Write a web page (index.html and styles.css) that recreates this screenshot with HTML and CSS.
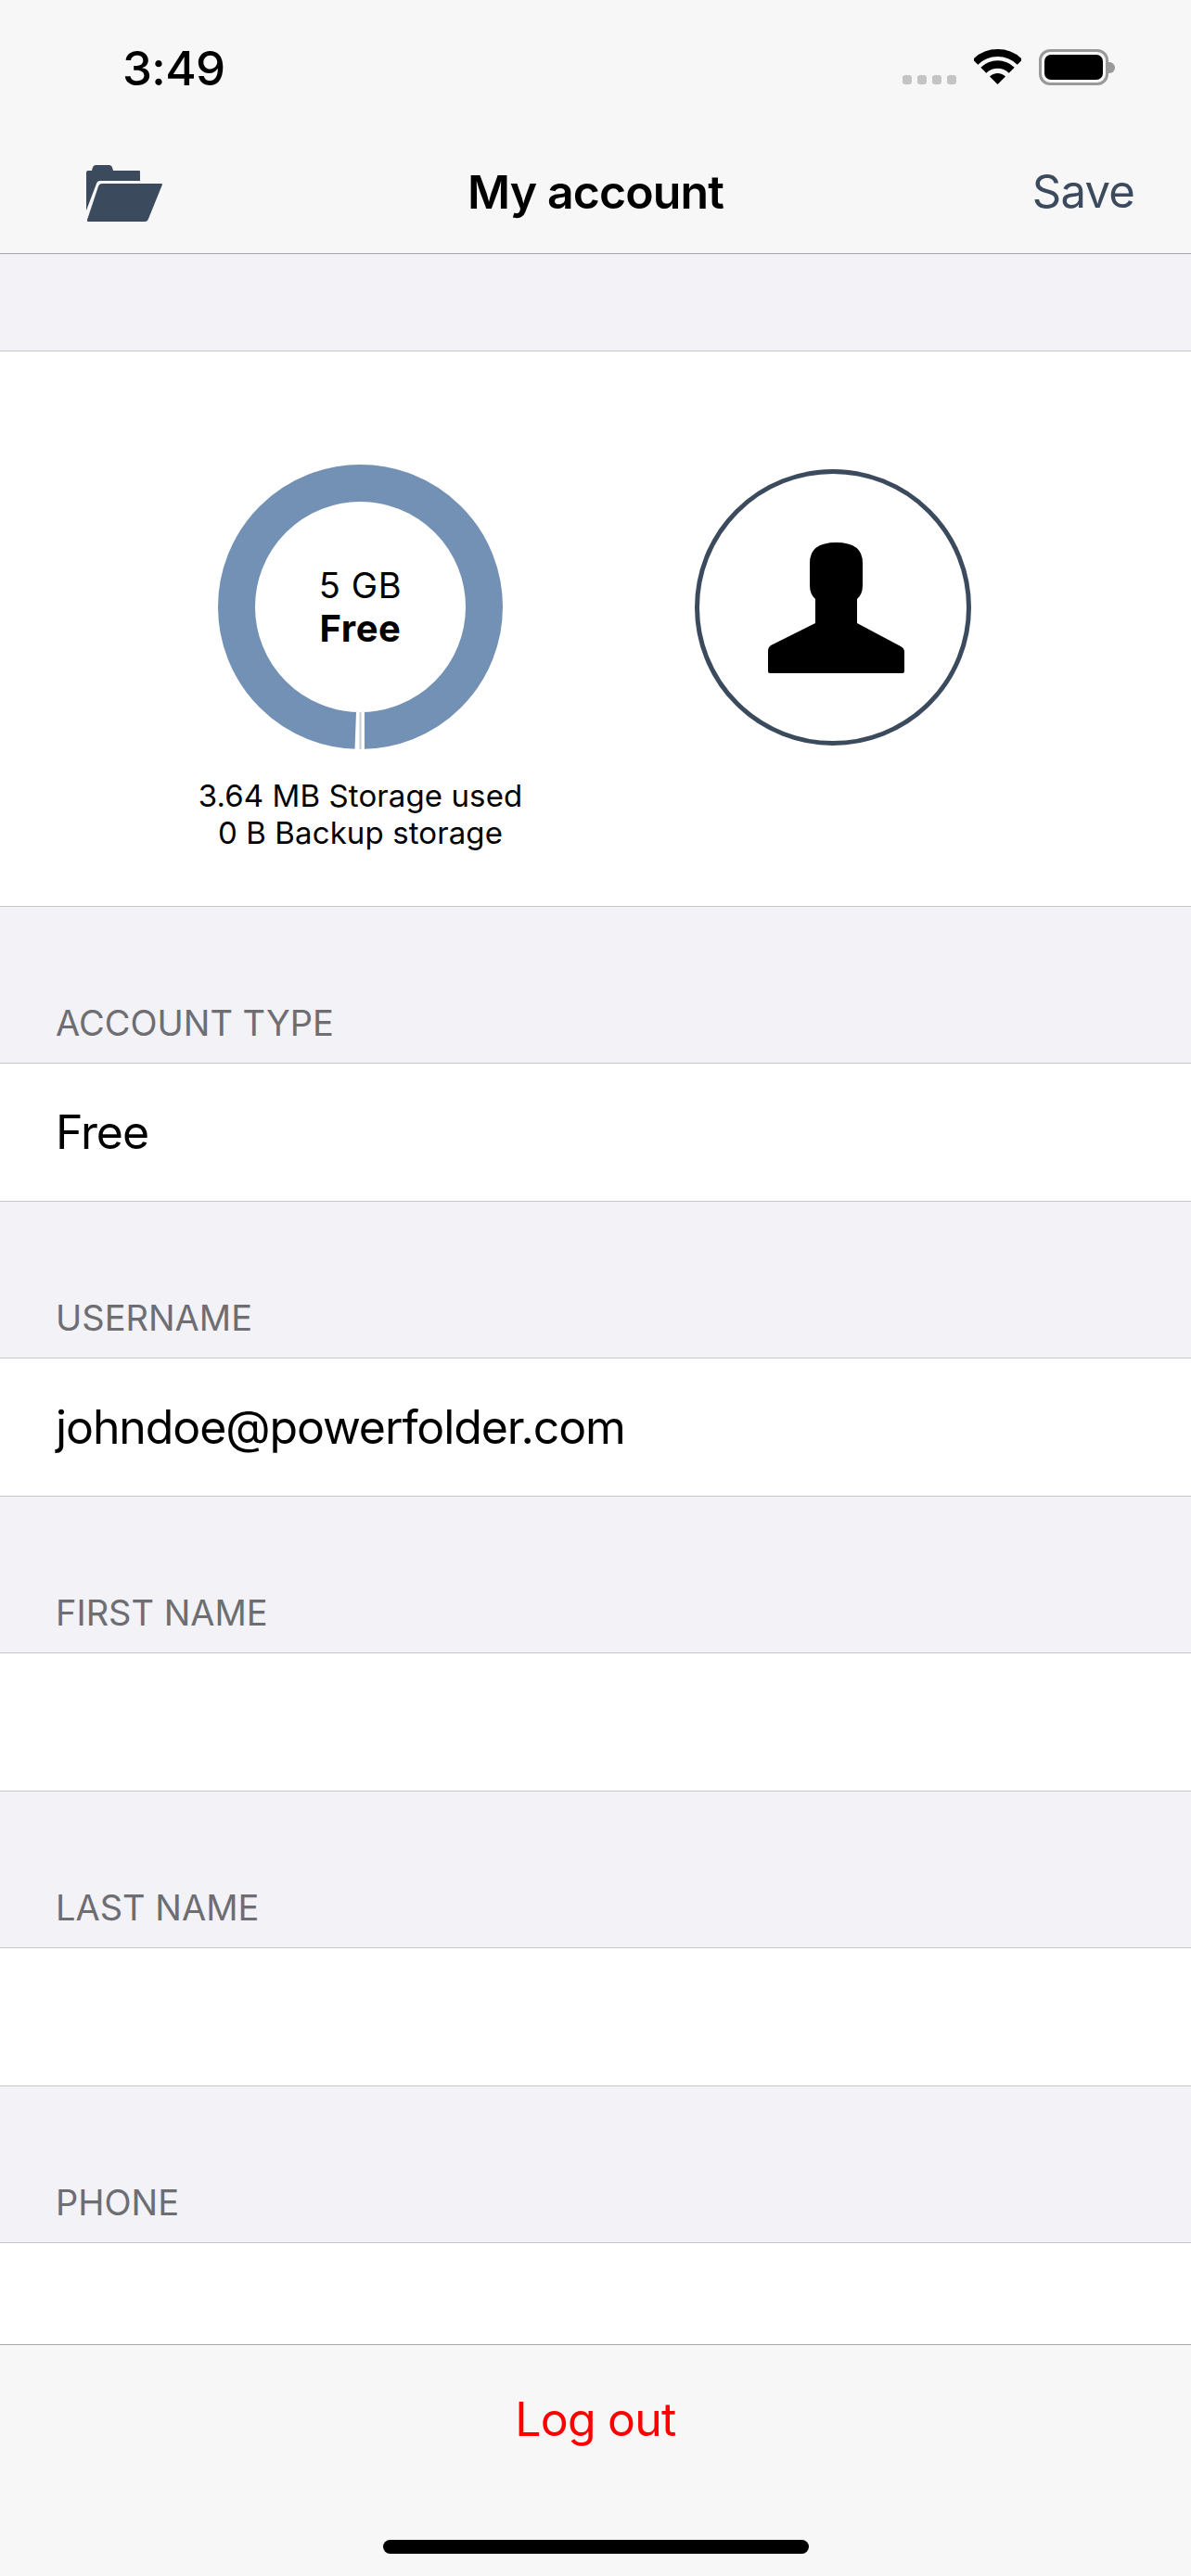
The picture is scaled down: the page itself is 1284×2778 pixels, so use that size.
FILE: index.html
```html
<!DOCTYPE html>
<html lang="en">
<head>
  <meta charset="UTF-8" />
  <meta name="viewport" content="width=device-width, initial-scale=1.0" />
  <title>My account</title>
  <link rel="stylesheet" href="styles.css">
</head>

<body>
  <header class="top">
    <div class="status-bar">
      <span class="time">3:49</span>
      <div class="status-icons">
        <div class="signal"><i></i><i></i><i></i><i></i></div>
        <svg class="wifi" width="51" height="38" viewBox="0 0 51 38">
          <path d="M1.5 14A34 34 0 0 1 49.5 14" fill="none" stroke="#000" stroke-width="8"/>
          <path d="M10.3 22.8A21.5 21.5 0 0 1 40.7 22.8" fill="none" stroke="#000" stroke-width="8.5"/>
          <path d="M25.5 38L17 29.5A12 12 0 0 1 34 29.5Z" fill="#000"/>
        </svg>
        <div class="battery"><div class="battery-fill"></div></div>
        <div class="battery-nub"></div>
      </div>
    </div>
    <nav class="nav-bar">
      <svg class="folder" width="82" height="61" viewBox="0 0 82 61">
        <path d="M0 49V8Q0 6 2 6H6Q7 0 10 0H25Q28 0 29 6H57Q58 6 58 7V17H15Q12 17 11 20Z" fill="#3c4a5e"/>
        <path d="M17 20H81Q82 20 82 21L67 58Q66 61 64 61H3Q0.5 61 1 59L13 23Q14 20 17 20Z" fill="#3c4a5e"/>
      </svg>
      <h1 class="title">My account</h1>
      <span class="save">Save</span>
    </nav>
  </header>

  <main class="content">
    <div class="spacer"></div>

    <section class="summary">
      <div class="storage">
        <div class="donut">
          <svg width="307" height="307" viewBox="0 0 307 307">
            <circle cx="153.5" cy="153.5" r="133.5" fill="none" stroke="#7390b5" stroke-width="40"/>
            <path d="M149 267H158V307H147.500Z" fill="#fff"/>
            <rect x="152.500" y="267" width="2" height="40" fill="#c6cdd8"/>
          </svg>
          <div class="donut-label">
            <div>5 GB</div>
            <div class="plan">Free</div>
          </div>
        </div>
        <div class="storage-text">
          <div>3.64 MB Storage used</div>
          <div>0 B Backup storage</div>
        </div>
      </div>
      <div class="avatar">
        <svg width="147" height="141" viewBox="0 0 147 141">
          <path d="M51 61Q45 56 45 46V22Q45 0 73.500 0Q102 0 102 22V46Q102 56 96 61V87L143 112Q147 114 147 118V139Q147 141 145 141H2Q0 141 0 139V117Q0 113 3 111L51 87Z" fill="#000"/>
        </svg>
      </div>
    </section>

    <div class="field-label">ACCOUNT TYPE</div>
    <div class="field">Free</div>

    <div class="field-label">USERNAME</div>
    <div class="field">johndoe@powerfolder.com</div>

    <div class="field-label">FIRST NAME</div>
    <div class="field"></div>

    <div class="field-label">LAST NAME</div>
    <div class="field"></div>

    <div class="field-label">PHONE</div>
    <div class="field"></div>
  </main>

  <footer class="toolbar">
    <span class="logout">Log out</span>
    <div class="home-indicator"></div>
  </footer>
</body>
</html>
```

FILE: styles.css
```css
/* Root Variables */
:root {
  --bar-bg: #f7f7f8;
  --group-bg: #f2f2f7;
  --separator: #c6c6c8;
  --bar-border: #a9a9ab;
  --slate: #3c4a5e;
  --label: #6d6d72;
}

* {
  box-sizing: border-box;
}

html,
body {
  margin: 0;
  height: 2778px;
  overflow: hidden;
}

body {
  display: flex;
  flex-direction: column;
  font-family: 'Inter', 'Liberation Sans', sans-serif;
  background: var(--group-bg);
  color: #000;
}

/* Top bars */
.top {
  flex: none;
  height: 274px;
  background: var(--bar-bg);
  border-bottom: 1px solid var(--bar-border);
}

.status-bar {
  height: 146px;
  padding: 45px 82px 0 132px;
  display: flex;
  justify-content: space-between;
  align-items: flex-start;
}

.time {
  font-size: 51px;
  line-height: 58px;
  font-weight: 500;
  letter-spacing: -0.6px;
}

.status-icons {
  display: flex;
  align-items: flex-start;
  padding-top: 8px;
}

.signal {
  display: flex;
  gap: 6px;
  margin-top: 28px;
  margin-right: 19px;
}

.signal i {
  width: 10px;
  height: 10px;
  border-radius: 3px;
  background: #c4c4c4;
}

.wifi {
  margin-right: 19px;
}

.battery {
  width: 75px;
  height: 39px;
  padding: 3px;
  border: 3px solid #999;
  border-radius: 12px;
}

.battery-fill {
  height: 100%;
  background: #000;
  border-radius: 7px;
}

.battery-nub {
  width: 7px;
  height: 12px;
  margin-top: 14px;
  background: #999;
  border-radius: 0 6px 6px 0;
}

.nav-bar {
  height: 127px;
  padding: 0 61px;
  display: grid;
  grid-template-columns: 1fr auto 1fr;
  align-items: center;
}

.folder {
  margin: -2px 0 0 32px;
}

.title {
  margin: -6px 0 0;
  font-size: 50px;
  line-height: 60px;
  font-weight: 600;
  letter-spacing: -0.9px;
}

.save {
  justify-self: end;
  margin-top: -6px;
  font-size: 49px;
  line-height: 60px;
  color: var(--slate);
  letter-spacing: -0.8px;
}

/* Scroll content */
.content {
  flex: 1;
  min-height: 0;
  overflow: hidden;
}

.spacer {
  height: 104px;
}

.summary {
  height: 600px;
  padding: 122px 0 0 215px;
  display: flex;
  align-items: flex-start;
  background: #fff;
  border-top: 1px solid var(--separator);
  border-bottom: 1px solid var(--separator);
}

.storage {
  width: 347px;
  display: flex;
  flex-direction: column;
  align-items: center;
}

.donut {
  display: grid;
  place-items: center;
}

.donut svg,
.donut-label {
  grid-area: 1 / 1;
}

.donut svg {
  display: block;
}

.donut-label {
  font-size: 38px;
  line-height: 46px;
  letter-spacing: 0.6px;
  text-align: center;
}

.plan {
  margin-top: 1px;
  font-weight: 700;
  font-size: 40px;
}

.storage-text {
  margin-top: 30px;
  font-size: 33px;
  line-height: 40px;
  letter-spacing: 0.1px;
  text-align: center;
  white-space: nowrap;
}

.avatar {
  width: 298px;
  height: 298px;
  margin: 5px 0 0 187px;
  display: flex;
  align-items: center;
  justify-content: center;
  border: 5px solid var(--slate);
  border-radius: 50%;
}

.avatar svg {
  margin-left: 6px;
}

/* Form fields */
.field-label {
  height: 168px;
  padding: 0 60px 19px;
  display: flex;
  align-items: flex-end;
  font-size: 38px;
  line-height: 48px;
  color: var(--label);
}

.field {
  height: 150px;
  padding: 0 60px;
  display: flex;
  align-items: center;
  font-size: 50px;
  letter-spacing: -1.1px;
  background: #fff;
  border-top: 1px solid var(--separator);
  border-bottom: 1px solid var(--separator);
}

/* Bottom toolbar */
.toolbar {
  flex: none;
  height: 250px;
  display: flex;
  flex-direction: column;
  align-items: center;
  background: var(--bar-bg);
  border-top: 1px solid var(--bar-border);
}

.logout {
  margin-top: 50px;
  font-size: 50px;
  line-height: 60px;
  color: #f00;
  letter-spacing: -0.8px;
}

.home-indicator {
  width: 459px;
  height: 15px;
  margin-top: 100px;
  background: #000;
  border-radius: 8px;
}
```
